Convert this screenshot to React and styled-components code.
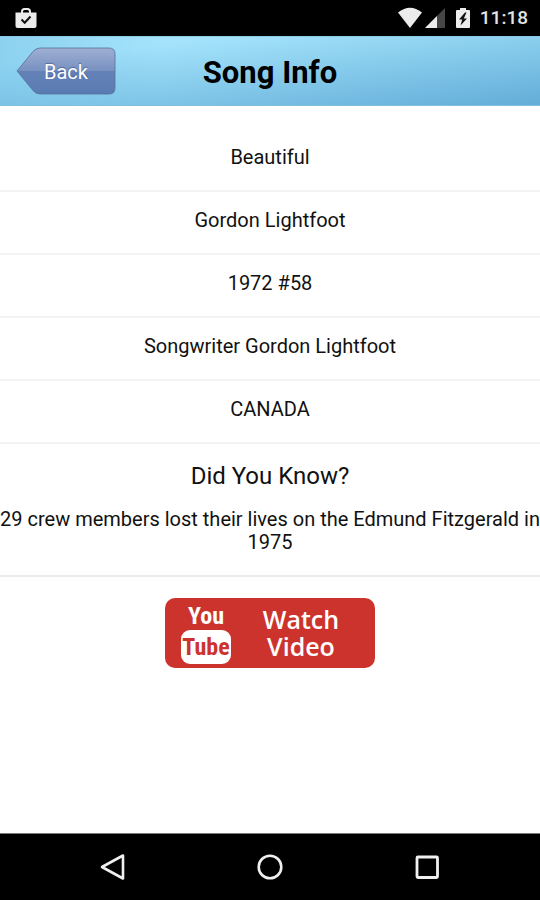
import React from 'react'
import styled, { createGlobalStyle } from 'styled-components'

const song = {
    details: ['Beautiful', 'Gordon Lightfoot', '1972 #58', 'Songwriter Gordon Lightfoot', 'CANADA'],
    fact: '29 crew members lost their lives on the Edmund Fitzgerald in 1975',
    video: '#video',
}

const StatusBar = () => (
    <Status>
        <svg width="22" height="22" viewBox="0 0 22 22" aria-hidden="true">
            <path d="M7 6V4.500Q7 2 9.500 2h3Q15 2 15 4.500V6" fill="none" stroke="#ececec" strokeWidth="2" />
            <path d="M.5 5.500h21V19q0 2-2 2h-17q-2 0-2-2z" fill="#ececec" />
            <path d="M6.500 12.500l3.200 3.200L15.500 9.500" fill="none" stroke="#111" strokeWidth="2" />
        </svg>
        <StatusRight>
            <svg width="48" height="22" viewBox="0 0 48 22" aria-hidden="true">
                <path d="M0 5.500Q12-4 24 5.500L12 21z" fill="#ececec" />
                <path d="M47 1v20H27z" fill="#464646" />
                <path d="M39 9v12H27z" fill="#ececec" />
            </svg>
            <svg width="14" height="22" viewBox="0 0 14 22" aria-hidden="true">
                <path d="M4 1h6v2h3q1 0 1 1v16q0 1-1 1H1q-1 0-1-1V4q0-1 1-1h3z" fill="#ececec" />
                <path d="M9 5.500L3 12.500h3.200L4.500 18.500 11 11.500H7.800L10.500 5.500z" fill="#111" />
            </svg>
            <Clock>11:18</Clock>
        </StatusRight>
    </Status>
)

const BackButton = () => (
    <Back type="button">
        <BackShape viewBox="0 0 100 48" aria-hidden="true">
            <defs>
                <linearGradient id="back-fill" x1="0" y1="0" x2="0" y2="1">
                    <stop offset="0" stopColor="#9fafd2" />
                    <stop offset=".5" stopColor="#7891c1" />
                    <stop offset=".5" stopColor="#6482b8" />
                    <stop offset="1" stopColor="#5a7bb2" />
                </linearGradient>
            </defs>
            <path
                d="M1 24L17 4.500Q20 1 24 1H93Q99 1 99 7V41Q99 47 93 47H24Q20 47 17 43.500Z"
                fill="url(#back-fill)"
                stroke="#557099"
                strokeOpacity=".8"
            />
        </BackShape>
        <BackLabel>Back</BackLabel>
    </Back>
)

const App = () => {
    return (
        <Page>
            <GlobalStyle />
            <StatusBar />
            <Header>
                <BackButton />
                <Title>Song Info</Title>
            </Header>

            <Content>
                {song.details.map(el => <Row key={el}>{el}</Row>)}
                <FactBox>
                    <FactTitle>Did You Know?</FactTitle>
                    <Fact>{song.fact}</Fact>
                </FactBox>
                <WatchLink href={song.video}>
                    <Logo>
                        <LogoTop>You</LogoTop>
                        <LogoTube>Tube</LogoTube>
                    </Logo>
                    <WatchText>Watch Video</WatchText>
                </WatchLink>
            </Content>

            <NavBar>
                <NavButton type="button" aria-label="Back">
                    <svg width="28" height="28" viewBox="0 0 28 28">
                        <path d="M24 2.500v23L3 14z" fill="none" stroke="#f0f0f0" strokeWidth="2.600" strokeLinejoin="round" />
                    </svg>
                </NavButton>
                <NavButton type="button" aria-label="Home">
                    <svg width="28" height="28" viewBox="0 0 28 28">
                        <circle cx="14" cy="14" r="11.300" fill="none" stroke="#f0f0f0" strokeWidth="2.600" />
                    </svg>
                </NavButton>
                <NavButton type="button" aria-label="Recent apps">
                    <svg width="28" height="28" viewBox="0 0 28 28">
                        <rect x="4" y="4" width="20.500" height="20.500" rx="1" fill="none" stroke="#f0f0f0" strokeWidth="2.800" />
                    </svg>
                </NavButton>
            </NavBar>
        </Page>
    )
}

export default App

const GlobalStyle = createGlobalStyle`
* {
    box-sizing: border-box;
}
body {
    margin: 0;
    background: #fff;
    color: #111;
    font-family: Roboto, sans-serif;
    font-size: 20px;
    line-height: 23px;
}
`
const Page = styled.div`
display: flex;
flex-direction: column;
min-height: 100vh;
`
const Status = styled.div`
display: flex;
justify-content: space-between;
align-items: center;
height: 36px;
padding: 0 12px 0 15px;
background: #000;
`
const StatusRight = styled.div`
display: flex;
align-items: center;
gap: 10px;
`
const Clock = styled.span`
color: #e4e4e4;
font-weight: 500;
font-size: 19px;
line-height: 24px;
`
const Header = styled.header`
display: grid;
grid-template-columns: 1fr auto 1fr;
align-items: center;
height: 70px;
padding: 0 16px;
background:
    linear-gradient(90deg, rgba(96, 176, 218, .35), rgba(96, 176, 218, 0) 30%),
    linear-gradient(173deg, #a4e3fb 20%, #84c9ea 58%, #64aed9 98%);
border-top: 1px solid #8cc9e6;
border-bottom: 1px solid #7fc0e0;
`
const Back = styled.button`
position: relative;
width: 100px;
height: 48px;
padding: 2px 0 0;
border: 0;
background: none;
color: #fff;
font: inherit;
cursor: pointer;
`
const BackShape = styled.svg`
position: absolute;
inset: 0;
width: 100%;
height: 100%;
`
const BackLabel = styled.span`
position: relative;
text-shadow: 0 -1px 1px rgba(40, 60, 110, .5);
`
const Title = styled.h1`
margin: 0;
padding-top: 4px;
color: #000;
font-size: 31px;
font-weight: 700;
line-height: 36px;
`
const Content = styled.main`
display: flex;
flex: 1;
flex-direction: column;
padding-top: 23px;
text-align: center;
`
const Row = styled.div`
padding: 17px 4px 21px;
border-bottom: 2px solid #f3f3f3;
`
const FactBox = styled.section`
padding: 18px 0 21px;
border-bottom: 2px solid #ebebeb;
`
const FactTitle = styled.h2`
margin: 0 0 18px;
font-size: 24px;
font-weight: 400;
line-height: 28px;
`
const Fact = styled.p`
margin: 0;
`
const WatchLink = styled.a`
display: flex;
align-items: center;
align-self: center;
gap: 28px;
width: 210px;
height: 70px;
margin: 21px 0;
padding: 0 16px;
border-radius: 10px;
background: #cd332d;
color: #fff;
text-decoration: none;
`
const Logo = styled.span`
display: flex;
flex-direction: column;
align-items: center;
width: 50px;
font-family: 'Roboto Condensed', Roboto, sans-serif;
font-weight: 700;
font-size: 24px;
`
const LogoTop = styled.span`
line-height: 27px;
`
const LogoTube = styled.span`
width: 100%;
border-radius: 9px;
background: #fff;
color: #cd332d;
line-height: 34px;
text-align: center;
`
const WatchText = styled.span`
flex: 1;
max-width: 84px;
font-family: 'Open Sans', sans-serif;
font-size: 25px;
font-weight: 600;
line-height: 27px;
text-align: center;
`
const NavBar = styled.nav`
display: flex;
justify-content: space-between;
align-items: center;
height: 67px;
padding: 0 84px;
border-top: 1px solid #777;
background: #000;
`
const NavButton = styled.button`
display: flex;
justify-content: center;
width: 58px;
padding: 10px 0;
border: 0;
background: none;
cursor: pointer;
`
